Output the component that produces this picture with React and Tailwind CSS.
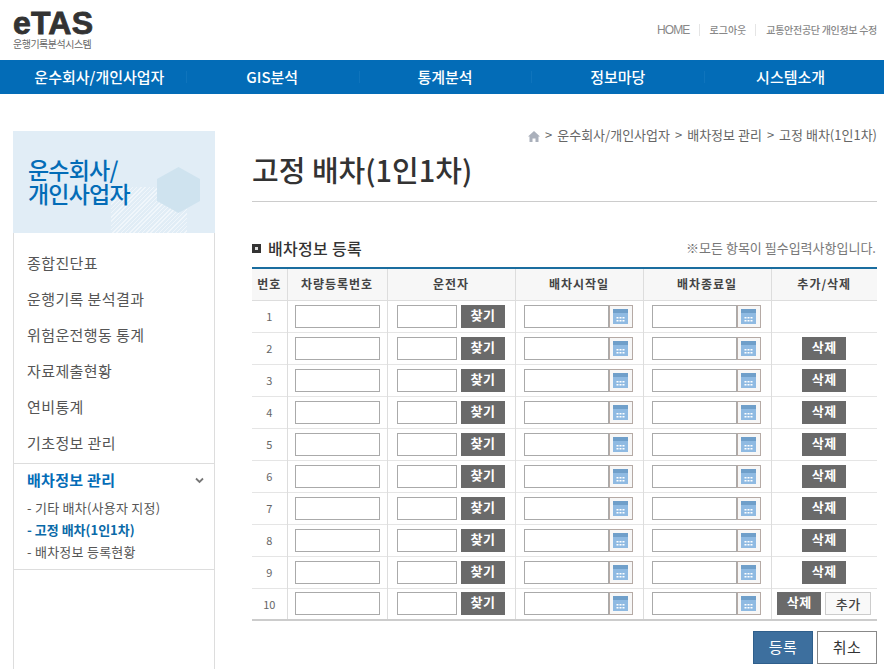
// App.jsx
import React from 'react';

const topMenu = ['운수회사/개인사업자', 'GIS분석', '통계분석', '정보마당', '시스템소개'];
const sideMenu = ['종합진단표', '운행기록 분석결과', '위험운전행동 통계', '자료제출현황', '연비통계', '기초정보 관리'];
const rows = [1, 2, 3, 4, 5, 6, 7, 8, 9, 10];

const CalendarButton = () => (
  <button className="w-[24px] h-[23px] border border-[#b5aaa5] border-l-[#b5aaa5] bg-[#f7f7f7] flex items-center justify-center">
    <svg width="15" height="15" viewBox="0 0 15 15">
      <rect x="0" y="0" width="15" height="15" fill="#6f9fca" />
      <rect x="0" y="4" width="15" height="11" fill="#8fbae2" />
      <rect x="3.5" y="8" width="2" height="1.5" fill="#fff" />
      <rect x="6.5" y="8" width="2" height="1.5" fill="#fff" />
      <rect x="9.5" y="8" width="2" height="1.5" fill="#fff" />
      <rect x="3.5" y="11" width="2" height="1.5" fill="#fff" />
      <rect x="6.5" y="11" width="2" height="1.5" fill="#fff" />
      <rect x="9.5" y="11" width="2" height="1.5" fill="#fff" />
    </svg>
  </button>
);

const DateField = () => (
  <div className="flex justify-center pr-[2px]">
    <input className="w-[85px] h-[23px] border border-[#aaa] bg-white" />
    <CalendarButton />
  </div>
);

const DarkButton = ({ label, className = 'w-[44px]' }) => (
  <button className={`${className} h-[23px] bg-[#6a6a6a] text-white text-[13px] font-bold leading-[20px] tracking-[0.5px] pb-[3px]`}>
    {label}
  </button>
);

const HeadCell = ({ label, className = '' }) => (
  <th className={`border-l border-[#ddd] first:border-l-0 font-bold text-[12px] text-[#444] tracking-[1px] text-center ${className}`}>
    {label}
  </th>
);

const App = () => {
  return (
    <div className="w-[884px] h-[669px] overflow-hidden bg-white font-['Noto_Sans_CJK_KR','Liberation_Sans',sans-serif]">
      {/* top bar */}
      <header className="h-[60px] pr-[7px] pl-[13px] flex justify-between">
        <div className="pt-[8px]">
          <div className="font-['Liberation_Sans',sans-serif] font-bold text-[32px] leading-[30px] text-[#333] tracking-[0.2px] [-webkit-text-stroke:0.8px_#333]">eTAS</div>
          <div className="text-[10px] leading-[11px] text-[#666] tracking-[-0.5px]">운행기록분석시스템</div>
        </div>
        <ul className="flex items-center h-[60px] text-[10px] text-[#888] font-medium">
          <li className="text-[12px] tracking-[-0.9px] font-normal font-['Liberation_Sans',sans-serif] pr-[10px]">HOME</li>
          <li className="border-l border-[#e5e5e5] px-[9px] leading-[12px]">로그아웃</li>
          <li className="border-l border-[#e5e5e5] pl-[10px] leading-[12px] tracking-[-0.3px]">교통안전공단 개인정보 수정</li>
        </ul>
      </header>

      {/* main nav */}
      <nav className="h-[34px] bg-[#036cb7] pl-[13px] pr-[7px] flex">
        {topMenu.map((menu, i) => (
          <a
            key={menu}
            className={`flex-1 flex items-center justify-center text-white text-[15px] font-medium tracking-[0px] h-full ${i > 0 ? 'relative before:absolute before:left-0 before:top-[11px] before:h-[12px] before:w-px before:bg-[#0f74bc]' : ''}`}
          >
            {menu}
          </a>
        ))}
      </nav>

      <div className="flex pl-[13px] pr-[7px] pt-[37px]">
        {/* side menu */}
        <aside className="w-[202px] h-[538px] border-x border-[#ddd] shrink-0">
          <div className="-mx-px h-[102px] bg-[#e1edf6] relative overflow-hidden pl-[15px] pt-[26px]">
            <div className="absolute left-[98px] top-[56px] w-[76px] h-[46px] bg-[repeating-linear-gradient(135deg,#f0f6fb_0,#f0f6fb_1px,transparent_1px,transparent_3px)]" />
            <svg className="absolute left-[144px] top-[36px]" width="43" height="46" viewBox="0 0 43 46">
              <polygon points="21.5,0 43,12 43,34 21.5,46 0,34 0,12" fill="#cfe3ef" />
            </svg>
            <h2 className="relative text-[#036cb7] text-[23px] leading-[24px] font-medium tracking-[-0.8px]">
              운수회사/<br />개인사업자
            </h2>
          </div>
          <ul className="pt-[12px]">
            {sideMenu.map((item) => (
              <li key={item} className="h-[36px] pl-[13px] flex items-center text-[15px] text-[#555] tracking-[0.4px]">
                {item}
              </li>
            ))}
          </ul>
          <div className="border-y border-[#ddd] mt-[2px] h-[107px] pl-[13px] pt-[5px] -mr-px">
            <div className="flex items-center justify-between pr-[11px]">
              <span className="text-[15px] font-bold text-[#036cb7] leading-[22px] tracking-[0.3px]">배차정보 관리</span>
              <svg width="9" height="7" viewBox="0 0 9 7">
                <path d="M1 1.5 L4.5 5 L8 1.5" fill="none" stroke="#777" strokeWidth="1.8" />
              </svg>
            </div>
            <ul className="pt-[6px] text-[13px] text-[#555] leading-[22px] tracking-[0.25px]">
              <li>- 기타 배차(사용자 지정)</li>
              <li className="font-bold text-[#0a6aa8] tracking-[0px]">- 고정 배차(1인1차)</li>
              <li>- 배차정보 등록현황</li>
            </ul>
          </div>
        </aside>

        {/* content */}
        <main className="ml-[37px] w-[625px]">
          <div className="flex items-center justify-end h-[10px] -mt-[1px] text-[13px] text-[#666] gap-[5px]">
            <svg width="12" height="11" viewBox="0 0 12 11" className="mt-[2px]">
              <path d="M6 0 L12 5.5 L10.5 5.5 L10.5 11 L7.5 11 L7.5 7.5 L4.5 7.5 L4.5 11 L1.5 11 L1.5 5.5 L0 5.5 Z" fill="#aab0bb" />
            </svg>
            <span>&gt;</span>
            <span>운수회사/개인사업자</span>
            <span>&gt;</span>
            <span>배차정보 관리</span>
            <span>&gt;</span>
            <span>고정 배차(1인1차)</span>
          </div>

          <h1 className="mt-[12px] h-[50px] border-b border-[#ccc] text-[29px] leading-[34px] font-medium text-[#333] tracking-[0px]">
            고정 배차(1인1차)
          </h1>

          <div className="mt-[35px] h-[30px] flex items-start justify-between">
            <div className="flex items-center gap-[7px] text-[16px] font-medium text-[#333] leading-[22px] tracking-[0.3px]">
              <span className="w-[9px] h-[9px] bg-[#333] flex items-center justify-center">
                <span className="w-[3px] h-[3px] bg-[#ddd]" />
              </span>
              배차정보 등록
            </div>
            <div className="text-[13px] text-[#777] pr-[1px] leading-[22px]">※모든 항목이 필수입력사항입니다.</div>
          </div>

          <table className="w-[625px] table-fixed border-collapse border-t-2 border-t-[#1a6d9f] border-b-2 border-b-[#ccc]">
            <colgroup>
              <col className="w-[35px]" />
              <col className="w-[100px]" />
              <col className="w-[128px]" />
              <col className="w-[128px]" />
              <col className="w-[128px]" />
              <col className="w-[106px]" />
            </colgroup>
            <thead>
              <tr className="h-[32px] bg-[#f7f7f7] border-b border-[#ddd]">
                <HeadCell label="번호" />
                <HeadCell label="차량등록번호" />
                <HeadCell label="운전자" />
                <HeadCell label="배차시작일" />
                <HeadCell label="배차종료일" />
                <HeadCell label="추가/삭제" />
              </tr>
            </thead>
            <tbody>
              {rows.map((no) => (
                <tr key={no} className="h-[32px] border-b border-[#e5e5e5] last:border-b-0">
                  <td className="text-center text-[11px] text-[#666]">{no}</td>
                  <td className="border-l border-[#ddd]">
                    <input className="block mx-auto w-[85px] h-[23px] border border-[#aaa] bg-white" />
                  </td>
                  <td className="border-l border-[#ddd]">
                    <div className="flex justify-center gap-[4px]">
                      <input className="w-[60px] h-[23px] border border-[#aaa] bg-white" />
                      <DarkButton label="찾기" />
                    </div>
                  </td>
                  <td className="border-l border-[#ddd]"><DateField /></td>
                  <td className="border-l border-[#ddd]"><DateField /></td>
                  <td className="border-l border-[#ddd]">
                    {no === 1 ? null : no === 10 ? (
                      <div className="flex justify-center gap-[4px]">
                        <DarkButton label="삭제" className="w-[44px]" />
                        <button className="w-[46px] h-[23px] border border-[#ccc] bg-[#f9f9f9] text-[13px] font-medium text-[#444] tracking-[0.5px]">추가</button>
                      </div>
                    ) : (
                      <div className="flex justify-center">
                        <DarkButton label="삭제" />
                      </div>
                    )}
                  </td>
                </tr>
              ))}
            </tbody>
          </table>

          <div className="mt-[10px] flex justify-end gap-[4px]">
            <button className="w-[60px] h-[33px] bg-[#3d6f9e] border border-[#2f5f8c] text-white text-[15px] tracking-[0.5px]">등록</button>
            <button className="w-[60px] h-[33px] bg-white border border-[#888] text-[#333] text-[15px] tracking-[0.5px]">취소</button>
          </div>
        </main>
      </div>
    </div>
  );
};

export default App;
